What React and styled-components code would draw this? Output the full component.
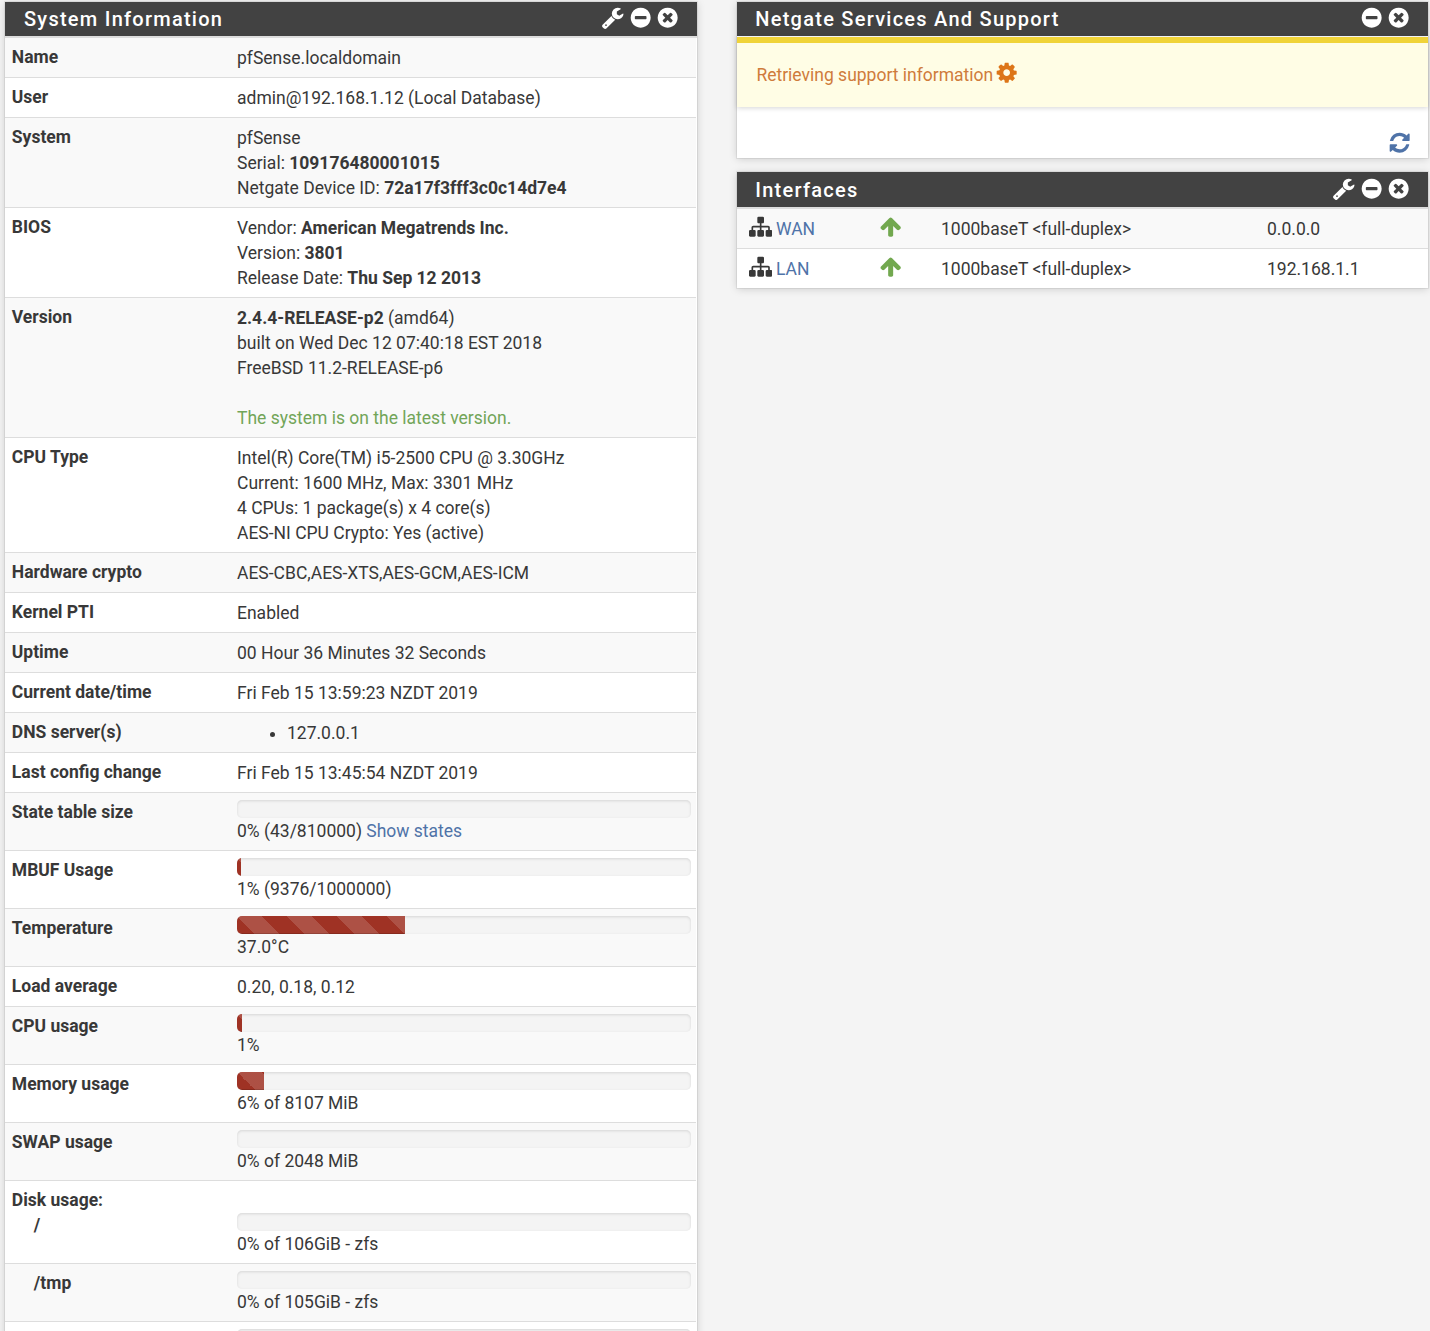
import React from "react";
import styled, { createGlobalStyle } from "styled-components";

const GlobalStyle = createGlobalStyle`
* {
  box-sizing: border-box;
}

html, body {
  height: 100%;
  margin: 0;
  overflow: hidden;
}

body {
  background: #f4f4f4;
  color: #383838;
  font-family: Roboto, "Liberation Sans", sans-serif;
  font-size: 17.5px;
  line-height: 25px;
}
`;

const circle =
  "q0 209-103 385.5t-279.5 279.5-385.5 103-385.5-103-279.5-279.5-103-385.5 103-385.5 279.5-279.5 385.5-103 385.5 103 279.5 279.5 103 385.5z";

const icons = {
  wrench:
    "M448 1472q0-26-19-45t-45-19-45 19-19 45 19 45 45 19 45-19 19-45zm644-420l-682 682q-37 37-90 37-52 0-91-37l-106-108q-38-36-38-90 0-53 38-91l681-681q39 98 114.5 173.5t173.5 114.5zm634-435q0 39-23 106-47 134-164.5 217.5t-258.5 83.5q-185 0-316.5-131.5t-131.5-316.5 131.5-316.5 316.5-131.5q58 0 121.5 16.5t107.5 46.5q16 11 16 28t-16 28l-293 169v224l193 107q5-3 79-48.5t135.5-81 70.5-35.5q15 0 23.5 10t8.5 25z",
  minus:
    "M1344 960v-128q0-26-19-45t-45-19h-768q-26 0-45 19t-19 45v128q0 26 19 45t45 19h768q26 0 45-19t19-45zm320-64" + circle,
  close:
    "M1277 1122q0-26-19-45l-181-181 181-181q19-19 19-45 0-27-19-46l-90-90q-19-19-46-19-26 0-45 19l-181 181-181-181q-19-19-45-19-27 0-46 19l-90 90q-19 19-19 46 0 26 19 45l181 181-181 181q-19 19-19 45 0 27 19 46l90 90q19 19 46 19 26 0 45-19l181-181 181 181q19 19 45 19 27 0 46-19l90-90q19-19 19-46zm387-226" + circle,
  refresh:
    "M1639 1056q0 5-1 7-64 268-268 434.5t-478 166.5q-146 0-282.5-55t-243.5-157l-129 129q-19 19-45 19t-45-19-19-45v-448q0-26 19-45t45-19h448q26 0 45 19t19 45-19 45l-137 137q71 66 161 102t187 36q134 0 250-65t186-179q11-17 53-117 8-23 30-23h192q13 0 22.5 9.5t9.5 22.5zm25-800v448q0 26-19 45t-45 19h-448q-26 0-45-19t-19-45 19-45l138-138q-148-137-349-137-134 0-250 65t-186 179q-11 17-53 117-8 23-30 23h-199q-13 0-22.5-9.5t-9.5-22.5v-7q65-268 270-434.5t480-166.5q146 0 284 55.5t245 156.5l130-129q19-19 45-19t45 19 19 45z",
  cog:
    "M1152 896q0-106-75-181t-181-75-181 75-75 181 75 181 181 75 181-75 75-181zm512-109v222q0 12-8 23t-20 13l-185 28q-19 54-39 91 35 50 107 138 10 12 10 25t-9 23q-27 37-99 108t-94 71q-12 0-26-9l-138-108q-44 23-91 38-16 136-29 186-7 28-36 28h-222q-14 0-24.5-8.5t-11.5-21.5l-28-184q-49-16-90-37l-141 107q-10 9-25 9-14 0-25-11-126-114-165-168-7-10-7-23 0-12 8-23 15-21 51-66.5t54-70.5q-27-50-41-99l-183-27q-13-2-21-12.5t-8-23.5v-222q0-12 8-23t19-13l186-28q14-46 39-92-40-57-107-138-10-12-10-24 0-10 9-23 26-36 98.5-107.5t94.5-71.5q13 0 26 10l138 107q44-23 91-38 16-136 29-186 7-28 36-28h222q14 0 24.5 8.5t11.5 21.5l28 184q49 16 90 37l142-107q9-9 24-9 13 0 25 10 129 119 165 170 7 8 7 22 0 12-8 23-15 21-51 66.5t-54 70.5q26 50 41 98l183 28q13 2 21 12.5t8 23.5z",
  up:
    "M1675 971q0 51-37 90l-75 75q-38 38-91 38-54 0-90-38l-294-293v704q0 52-37.5 84.5t-90.5 32.5h-128q-53 0-90.5-32.5t-37.5-84.5v-704l-294 293q-36 38-90 38t-90-38l-75-75q-38-38-38-90 0-53 38-91l651-651q35-37 90-37 54 0 91 37l651 651q37 39 37 91z",
  sitemap:
    "M1792 1248v320q0 40-28 68t-68 28h-320q-40 0-68-28t-28-68v-320q0-40 28-68t68-28h96v-192h-512v192h96q40 0 68 28t28 68v320q0 40-28 68t-68 28h-320q-40 0-68-28t-28-68v-320q0-40 28-68t68-28h96v-192h-512v192h96q40 0 68 28t28 68v320q0 40-28 68t-68 28h-320q-40 0-68-28t-28-68v-320q0-40 28-68t68-28h96v-192q0-52 38-90t90-38h512v-192h-96q-40 0-68-28t-28-68v-320q0-40 28-68t68-28h320q40 0 68 28t28 68v320q0 40-28 68t-68 28h-96v192h512q52 0 90 38t38 90v192h96q40 0 68 28t28 68z",
};

const Svg = styled.svg`
  display: block;
  flex: none;
  width: 23.33px;
  height: 23.33px;
  fill: currentColor;
`;

function Icon({ name }) {
  return (
    <Svg viewBox="0 0 1792 1792" aria-hidden="true">
      <path d={icons[name]} />
    </Svg>
  );
}

const Page = styled.main`
  display: grid;
  grid-template-columns: 692px 691px;
  column-gap: 40px;
  align-items: start;
  height: 1331px;
  padding: 2px 0 0 5px;
  overflow: hidden;
`;

const Column = styled.div`
  display: flex;
  flex-direction: column;
  gap: 14px;
`;

const Panel = styled.section`
  background: #fff;
  box-shadow: 0 0 0 1px rgba(0, 0, 0, 0.06), 0 1px 8px rgba(0, 0, 0, 0.17);
`;

const PanelHead = styled.header`
  display: flex;
  align-items: center;
  justify-content: space-between;
  height: ${(props) => props.$height || 34}px;
  padding: 0 18px 0 ${(props) => props.$indent || 19}px;
  background: #424242;
  color: #fff;

  h2 {
    margin: 0;
    font-size: 20px;
    font-weight: 500;
    line-height: 34px;
    letter-spacing: 1.25px;
  }
`;

const Tools = styled.div`
  display: flex;
  gap: 3.8px;
  margin-top: -2px;
`;

const Table = styled.div`
  border-top: 2px solid #ddd;
`;

const Row = styled.div`
  display: grid;
  grid-template-columns: 225px 454px;
  padding: 7px;
  margin-right: 1px;
  border-bottom: 1px solid #ddd;

  &:nth-child(odd) {
    background: #f9f9f9;
  }
`;

const Label = styled.div`
  margin-left: -0.2px;
  font-weight: 700;

  span {
    padding-left: 22px;
  }
`;

const Value = styled.div`
  padding-top: ${(props) => (props.$offset ? 25 : 0)}px;

  strong {
    font-weight: 700;
  }

  ul {
    margin: 0;
    padding-left: 50px;
  }
`;

const Text = styled.div`
  margin: 1px 0 -1px;
  white-space: pre-line;
`;

const Link = styled.a`
  color: #4f73a8;
  text-decoration: none;
`;

const Latest = styled.span`
  color: #72a558;
`;

const Track = styled.div`
  height: 18px;
  overflow: hidden;
  border-radius: 5px;
  background: #f4f4f4;
  box-shadow: inset 0 1px 3px rgba(0, 0, 0, 0.12);
`;

const Fill = styled.div`
  height: 100%;
  background-color: #9f3224;
  background-image: linear-gradient(
    45deg,
    rgba(255, 255, 255, 0.15) 25%,
    transparent 25%,
    transparent 50%,
    rgba(255, 255, 255, 0.15) 50%,
    rgba(255, 255, 255, 0.15) 75%,
    transparent 75%
  );
  background-size: 50px 50px;
  box-shadow: inset 0 -1px 0 rgba(0, 0, 0, 0.15);
`;

const Alert = styled.div`
  display: flex;
  height: 70px;
  margin-top: 1px;
  padding: 20px 19.4px 0;
  gap: 2px;
  border-top: 6px solid #f0d338;
  background: #fffde5;
  box-shadow: 0 1px 5px rgba(0, 0, 0, 0.17);
  color: #cf7b3b;

  svg {
    margin-top: -2px;
    color: #dd7518;
  }
`;

const Footer = styled.div`
  display: flex;
  justify-content: flex-end;
  padding: 24px 17px 4px;
  color: #4f73a8;
`;

const InterfaceRow = styled.div`
  display: grid;
  grid-template-columns: 130px 62px 326px 1fr;
  padding: 8px 12px 6px;

  &:nth-child(odd) {
    background: #f9f9f9;
  }

  & + & {
    border-top: 1px solid #ddd;
  }

  svg {
    margin-top: -2px;
  }
`;

const Port = styled.div`
  display: flex;
  gap: 3.7px;
`;

const Up = styled.div`
  color: #72a84f;
`;

function Bar({ value }) {
  return (
    <Track>
      <Fill style={{ width: `${value}%` }} />
    </Track>
  );
}

function Heading({ title, wrench, height, indent }) {
  return (
    <PanelHead $height={height} $indent={indent}>
      <h2>{title}</h2>
      <Tools>
        {wrench && <Icon name="wrench" />}
        <Icon name="minus" />
        <Icon name="close" />
      </Tools>
    </PanelHead>
  );
}

const rows = [
  { label: "Name", value: "pfSense.localdomain" },
  { label: "User", value: "admin@192.168.1.12 (Local Database)" },
  {
    label: "System",
    value: (
      <>
        pfSense
        <br />
        Serial: <strong>109176480001015</strong>
        <br />
        Netgate Device ID: <strong>72a17f3fff3c0c14d7e4</strong>
      </>
    ),
  },
  {
    label: "BIOS",
    value: (
      <>
        Vendor: <strong>American Megatrends Inc.</strong>
        <br />
        Version: <strong>3801</strong>
        <br />
        Release Date: <strong>Thu Sep 12 2013</strong>
      </>
    ),
  },
  {
    label: "Version",
    value: (
      <>
        <strong>2.4.4-RELEASE-p2</strong> (amd64)
        <br />
        built on Wed Dec 12 07:40:18 EST 2018
        <br />
        FreeBSD 11.2-RELEASE-p6
        <br />
        <br />
        <Latest>The system is on the latest version.</Latest>
      </>
    ),
  },
  {
    label: "CPU Type",
    value:
      "Intel(R) Core(TM) i5-2500 CPU @ 3.30GHz\nCurrent: 1600 MHz, Max: 3301 MHz\n4 CPUs: 1 package(s) x 4 core(s)\nAES-NI CPU Crypto: Yes (active)",
  },
  { label: "Hardware crypto", value: "AES-CBC,AES-XTS,AES-GCM,AES-ICM" },
  { label: "Kernel PTI", value: "Enabled" },
  { label: "Uptime", value: "00 Hour 36 Minutes 32 Seconds" },
  { label: "Current date/time", value: "Fri Feb 15 13:59:23 NZDT 2019" },
  {
    label: "DNS server(s)",
    value: (
      <ul>
        <li>127.0.0.1</li>
      </ul>
    ),
  },
  { label: "Last config change", value: "Fri Feb 15 13:45:54 NZDT 2019" },
  {
    label: "State table size",
    bar: 0,
    value: (
      <>
        0% (43/810000) <Link>Show states</Link>
      </>
    ),
  },
  { label: "MBUF Usage", bar: 0.94, value: "1% (9376/1000000)" },
  { label: "Temperature", bar: 37, value: "37.0°C" },
  { label: "Load average", value: "0.20, 0.18, 0.12" },
  { label: "CPU usage", bar: 1.1, value: "1%" },
  { label: "Memory usage", bar: 6, value: "6% of 8107 MiB" },
  { label: "SWAP usage", bar: 0, value: "0% of 2048 MiB" },
  {
    label: (
      <>
        Disk usage:
        <br />
        <span>/</span>
      </>
    ),
    offset: true,
    bar: 0,
    value: "0% of 106GiB - zfs",
  },
  { label: <span>/tmp</span>, bar: 0, value: "0% of 105GiB - zfs" },
  { label: "", bar: 0, value: "" },
];

const interfaces = [
  { name: "WAN", media: "1000baseT <full-duplex>", address: "0.0.0.0" },
  { name: "LAN", media: "1000baseT <full-duplex>", address: "192.168.1.1" },
];

function App() {
  return (
    <>
      <GlobalStyle />
      <Page>
        <Panel>
          <Heading title="System Information" wrench />
          <Table>
            {rows.map((row, i) => (
              <Row key={i}>
                <Label>{row.label}</Label>
                <Value $offset={row.offset}>
                  {row.bar !== undefined && <Bar value={row.bar} />}
                  <Text>{row.value}</Text>
                </Value>
              </Row>
            ))}
          </Table>
        </Panel>
        <Column>
          <Panel>
            <Heading title="Netgate Services And Support" indent={18.3} />
            <Alert>
              Retrieving support information
              <Icon name="cog" />
            </Alert>
            <Footer>
              <Icon name="refresh" />
            </Footer>
          </Panel>
          <Panel>
            <Heading title="Interfaces" wrench height={35} indent={18.3} />
            <Table>
              {interfaces.map((item) => (
                <InterfaceRow key={item.name}>
                  <Port>
                    <Icon name="sitemap" />
                    <Link>{item.name}</Link>
                  </Port>
                  <Up>
                    <Icon name="up" />
                  </Up>
                  <span>{item.media}</span>
                  <span>{item.address}</span>
                </InterfaceRow>
              ))}
            </Table>
          </Panel>
        </Column>
      </Page>
    </>
  );
}

export default App;
